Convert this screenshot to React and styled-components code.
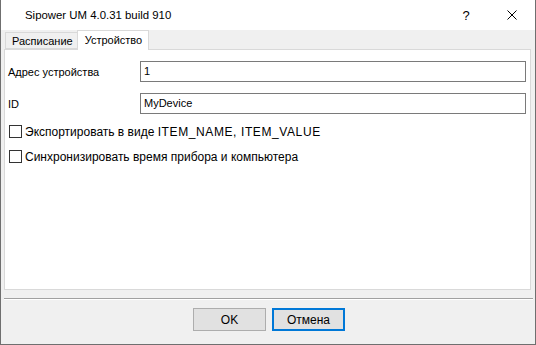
import React from 'react'
import styled, { createGlobalStyle } from 'styled-components'

const GlobalStyle = createGlobalStyle`
  html, body { margin: 0; padding: 0; background: #ffffff; }
  * { box-sizing: border-box; }
`

const Window = styled.div`
  width: 536px;
  height: 345px;
  display: flex;
  flex-direction: column;
  border: 1px solid #6f6f6f;
  border-top: none;
  font-family: "Liberation Sans", Arial, sans-serif;
  color: #000;
`

const TitleBar = styled.div`
  height: 30px;
  background: #ffffff;
  display: flex;
  align-items: center;
  padding-left: 24px;
  font-size: 11.4px;
`

const Title = styled.div`
  flex: 1;
`

const CaptionButton = styled.div`
  width: 46px;
  height: 30px;
  display: flex;
  align-items: center;
  justify-content: center;
  font-size: 13px;
`

const Client = styled.div`
  flex: 1;
  background: #f0f0f0;
  display: flex;
  flex-direction: column;
`

const TabStrip = styled.div`
  height: 19px;
  display: flex;
  align-items: flex-end;
  padding-left: 4px;
  position: relative;
  z-index: 1;
`

const Tab = styled.div`
  height: ${p => (p.active ? '20px' : '17px')};
  padding: 1px ${p => (p.active ? '6px' : '4px')} 0 ${p => (p.active ? '7px' : '6px')};
  margin-bottom: ${p => (p.active ? '-1px' : '0')};
  margin-left: ${p => (p.active ? '-1px' : '0')};
  background: ${p => (p.active ? '#ffffff' : '#f0f0f0')};
  border: 1px solid #d9d9d9;
  border-bottom: ${p => (p.active ? 'none' : '1px solid #d9d9d9')};
  font-size: 11px;
  line-height: ${p => (p.active ? '16px' : '14px')};
  white-space: nowrap;
`

const Panel = styled.div`
  height: 241px;
  margin: 0 4px 0 3px;
  background: #ffffff;
  border: 1px solid #d9d9d9;
  padding: 11px 4px 0 2px;
  font-size: 11px;
`

const FieldGrid = styled.div`
  display: grid;
  grid-template-columns: 133px 1fr;
  row-gap: 11px;
  align-items: center;
`

const Label = styled.div`
  padding-left: 1px;
`

const TextInput = styled.div`
  height: 21px;
  border: 1px solid #7a7a7a;
  background: #fff;
  padding-left: 3px;
  line-height: 18px;
  font-size: 11px;
`

const CheckList = styled.div`
  display: flex;
  flex-direction: column;
  gap: 12px;
  margin-top: 11px;
  padding-left: 2px;
`

const CheckRow = styled.label`
  display: flex;
  align-items: center;
  gap: 3px;
  height: 13px;
  font-size: 12px;
  white-space: pre;
`

const Caps = styled.span`
  letter-spacing: 0.6px;
`

const Box = styled.span`
  width: 13px;
  height: 13px;
  border: 1px solid #333333;
  background: #fff;
  flex-shrink: 0;
`

const Separator = styled.div`
  height: 2px;
  margin: 8px 2px 0 3px;
  border-top: 1px solid #a0a0a0;
  border-bottom: 1px solid #ffffff;
`

const ButtonRow = styled.div`
  display: flex;
  justify-content: center;
  gap: 6px;
  margin-top: 8px;
  padding-left: 2px;
`

const Button = styled.div`
  width: 73px;
  height: 23px;
  background: #e1e1e1;
  border: ${p => (p.primary ? '2px solid #0078d7' : '1px solid #adadad')};
  display: flex;
  align-items: center;
  justify-content: center;
  font-size: 12px;
`

export default function App() {
  return (
    <>
      <GlobalStyle />
      <Window>
        <TitleBar>
          <Title>Sipower UM 4.0.31 build 910</Title>
          <CaptionButton>?</CaptionButton>
          <CaptionButton>
            <svg width="10" height="10" viewBox="0 0 10 10">
              <path d="M0.5 0.5 L9.5 9.5 M9.5 0.5 L0.5 9.5" stroke="#000" strokeWidth="1" />
            </svg>
          </CaptionButton>
        </TitleBar>
        <Client>
          <TabStrip>
            <Tab>Расписание</Tab>
            <Tab active>Устройство</Tab>
          </TabStrip>
          <Panel>
            <FieldGrid>
              <Label>Адрес устройства</Label>
              <TextInput>1</TextInput>
              <Label>ID</Label>
              <TextInput>MyDevice</TextInput>
            </FieldGrid>
            <CheckList>
              <CheckRow><Box /><span>Экспортировать в виде <Caps>ITEM_NAME, ITEM_VALUE</Caps></span></CheckRow>
              <CheckRow><Box /><span>Синхронизировать время прибора и компьютера</span></CheckRow>
            </CheckList>
          </Panel>
          <Separator />
          <ButtonRow>
            <Button>OK</Button>
            <Button primary>Отмена</Button>
          </ButtonRow>
        </Client>
      </Window>
    </>
  )
}
